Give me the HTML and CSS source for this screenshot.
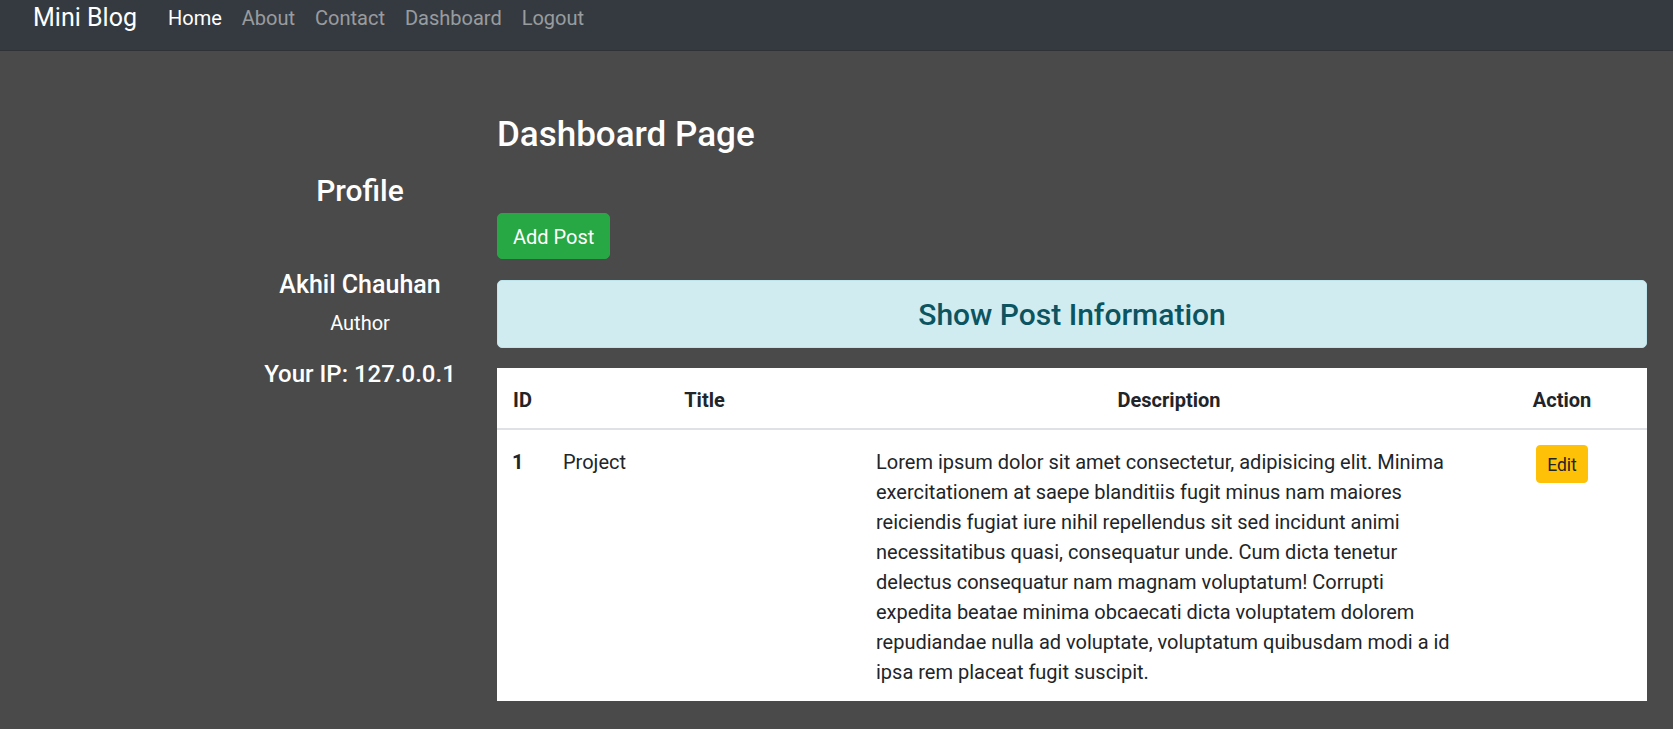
FILE: index.html
```html
<!DOCTYPE html>
<html lang="en">
<head>
<meta charset="utf-8">
<title>Mini Blog - Dashboard</title>
<link rel="stylesheet" href="styles.css">
</head>
<body>
<nav class="navbar">
  <a class="brand" href="#">Mini Blog</a>
  <ul class="nav">
    <li><a class="nav-link active" href="#">Home</a></li>
    <li><a class="nav-link" href="#">About</a></li>
    <li><a class="nav-link" href="#">Contact</a></li>
    <li><a class="nav-link" href="#">Dashboard</a></li>
    <li><a class="nav-link" href="#">Logout</a></li>
  </ul>
</nav>
<div class="page">
  <aside class="profile">
    <h4 class="profile-title">Profile</h4>
    <h5 class="profile-name">Akhil Chauhan</h5>
    <p class="profile-role">Author</p>
    <h5 class="profile-ip">Your IP: 127.0.0.1</h5>
  </aside>
  <main class="main">
    <h3 class="page-title">Dashboard Page</h3>
    <a class="btn btn-success" href="#">Add Post</a>
    <div class="alert-info">
      <h4 class="alert-title">Show Post Information</h4>
    </div>
    <table class="table">
      <colgroup>
        <col class="col-id">
        <col class="col-title">
        <col class="col-desc">
        <col class="col-action">
      </colgroup>
      <thead>
        <tr>
          <th>ID</th>
          <th>Title</th>
          <th>Description</th>
          <th>Action</th>
        </tr>
      </thead>
      <tbody>
        <tr>
          <th class="row-id">1</th>
          <td>Project</td>
          <td>Lorem ipsum dolor sit amet consectetur, adipisicing elit. Minima exercitationem at saepe blanditiis fugit minus nam maiores reiciendis fugiat iure nihil repellendus sit sed incidunt animi necessitatibus quasi, consequatur unde. Cum dicta tenetur delectus consequatur nam magnam voluptatum! Corrupti expedita beatae minima obcaecati dicta voluptatem dolorem repudiandae nulla ad voluptate, voluptatum quibusdam modi a id ipsa rem placeat fugit suscipit.</td>
          <td class="cell-action"><a class="btn btn-warning btn-sm" href="#">Edit</a></td>
        </tr>
      </tbody>
    </table>
  </main>
</div>
</body>
</html>
```

FILE: styles.css
```css
* { box-sizing: border-box; }

html, body {
  margin: 0;
  padding: 0;
}

body {
  background: #4a4a4a;
  color: #212529;
  font-family: "Segoe UI", Roboto, "Noto Sans", sans-serif;
  font-size: 20px;
  line-height: 30px;
  min-height: 729px;
}

a { text-decoration: none; }

/* Navbar */
.navbar {
  display: flex;
  align-items: center;
  height: 51px;
  padding: 0 0 15px 33px;
  background: #343a40;
  border-bottom: 1px solid #2f3338;
}

.brand {
  color: #fff;
  font-size: 25px;
  line-height: 30px;
  margin-right: 21px;
}

.nav {
  display: flex;
  list-style: none;
  margin: 0;
  padding: 0;
}

.nav-link {
  display: block;
  padding: 0 10px;
  color: rgba(255, 255, 255, 0.5);
  font-size: 20px;
  line-height: 30px;
}

.nav-link.active { color: #fff; }

/* Page layout */
.page {
  display: flex;
  padding: 0 26px 0 223px;
}

.profile {
  width: 274px;
  flex: none;
  text-align: center;
  color: #fff;
  padding-top: 122px;
}

.profile-title {
  margin: 0;
  font-size: 30px;
  line-height: 36px;
  font-weight: 500;
}

.profile-name {
  margin: 61px 0 8px;
  font-size: 25px;
  line-height: 30px;
  font-weight: 500;
}

.profile-role {
  margin: 0 0 21px;
  font-size: 20px;
  line-height: 30px;
}

.profile-ip {
  margin: 0;
  font-size: 24px;
  line-height: 30px;
  font-weight: 500;
}

.main {
  flex: 1;
  min-width: 0;
  padding-top: 62px;
  display: flex;
  flex-direction: column;
  align-items: flex-start;
}

.page-title {
  margin: 1px 0 57px;
  color: #fff;
  font-size: 35px;
  line-height: 42px;
  font-weight: 500;
}

.btn {
  display: inline-block;
  border: 1px solid transparent;
  border-radius: 5px;
  text-align: center;
}

.btn-success {
  background: #28a745;
  border-color: #28a745;
  color: #fff;
  font-size: 20px;
  line-height: 30px;
  padding: 8px 15px 6px;
}

.alert-info {
  align-self: stretch;
  margin-top: 21px;
  margin-bottom: 20px;
  padding: 16px 20px 14px;
  background: #d1ecf1;
  border: 1px solid #bee5eb;
  border-radius: 5px;
  text-align: center;
}

.alert-title {
  margin: 0;
  color: #0c5460;
  font-size: 30px;
  line-height: 36px;
  font-weight: 500;
}

/* Table */
.table {
  align-self: stretch;
  width: 100%;
  table-layout: fixed;
  border-collapse: collapse;
  background: #fff;
  color: #212529;
}

.col-id { width: 51px; }
.col-title { width: 313px; }
.col-desc { width: 616px; }
.col-action { width: 170px; }

.table th,
.table td {
  padding: 17px 15px 14px;
  vertical-align: top;
  text-align: left;
  font-size: 20px;
  line-height: 30px;
}

.table thead th {
  padding: 17px 15px 13px;
  text-align: center;
  font-weight: 700;
  border-bottom: 2px solid #dee2e6;
}

.table .row-id {
  font-weight: 700;
}

.table .cell-action {
  padding-top: 15px;
  text-align: center;
}

.btn-warning {
  background: #ffc107;
  border-color: #ffc107;
  color: #212529;
}

.btn-sm {
  font-size: 17.5px;
  line-height: 26px;
  padding: 6px 10px 4px;
  border-radius: 4px;
}
```
